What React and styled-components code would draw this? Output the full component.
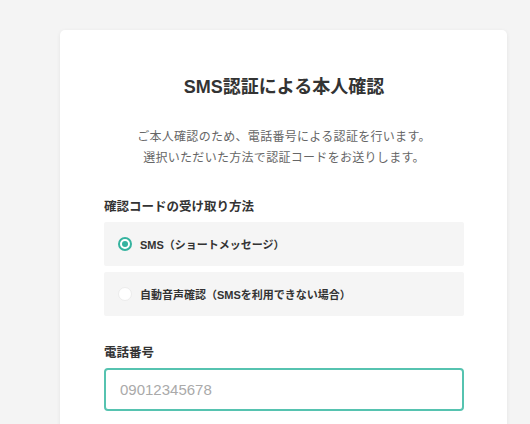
import React from 'react';
import styled, { createGlobalStyle } from 'styled-components';

const GlobalStyle = createGlobalStyle`
  html, body {
    margin: 0;
    padding: 0;
    background: #f4f4f4;
  }
  body {
    font-family: "Liberation Sans", "Noto Sans CJK JP", sans-serif;
    color: #333;
  }
`;

const Page = styled.div`
  padding: 30px 0 0 60px;
`;

const Card = styled.div`
  width: 447px;
  box-sizing: border-box;
  padding: 44px 43px 40px 44px;
  background: #fff;
  border-radius: 5px;
  box-shadow: 0 1px 4px rgba(0, 0, 0, 0.07);
`;

const Title = styled.h1`
  margin: 0;
  font-size: 18px;
  line-height: 26px;
  font-weight: 700;
  text-align: center;
  color: #333;
`;

const Lead = styled.p`
  margin: 27px 0 0;
  font-size: 12px;
  line-height: 21px;
  letter-spacing: 0.3px;
  text-align: center;
  color: #666;
`;

const Section = styled.div`
  margin-top: ${(p) => p.$top}px;
`;

const Label = styled.div`
  font-size: 12.5px;
  line-height: 18px;
  font-weight: 700;
  color: #333;
  margin-bottom: 6px;
`;

const Options = styled.div`
  display: flex;
  flex-direction: column;
  gap: 6.5px;
`;

const Option = styled.label`
  display: flex;
  align-items: center;
  gap: 8px;
  height: 43.5px;
  padding-left: 14px;
  background: #f5f5f5;
  border-radius: 2px;
  cursor: pointer;
`;

const Radio = styled.span`
  width: 14px;
  height: 14px;
  box-sizing: border-box;
  border-radius: 50%;
  background: #fff;
  border: ${(p) => (p.$checked ? '2px solid #35b39f' : '1px solid #ececec')};
  display: flex;
  align-items: center;
  justify-content: center;

  &::after {
    content: '';
    display: ${(p) => (p.$checked ? 'block' : 'none')};
    width: 6px;
    height: 6px;
    border-radius: 50%;
    background: #35b39f;
  }
`;

const OptionText = styled.span`
  font-size: 11px;
  font-weight: 700;
  color: #333;
`;

const Input = styled.input`
  display: block;
  width: 100%;
  height: 43px;
  box-sizing: border-box;
  padding: 0 14px;
  border: 2px solid #56c3b0;
  border-radius: 4px;
  font-family: "Liberation Sans", "Noto Sans CJK JP", sans-serif;
  font-size: 15px;
  color: #333;
  caret-color: #333;
  outline: none;

  &::placeholder {
    color: #aaa;
  }
`;

const methods = [
  { id: 'sms', label: 'SMS（ショートメッセージ）' },
  { id: 'voice', label: '自動音声確認（SMSを利用できない場合）' },
];

export default function App() {
  const [method, setMethod] = React.useState('sms');

  return (
    <>
      <GlobalStyle />
      <Page>
        <Card>
          <Title>SMS認証による本人確認</Title>
          <Lead>
            ご本人確認のため、電話番号による認証を行います。
            <br />
            選択いただいた方法で認証コードをお送りします。
          </Lead>

          <Section $top={29}>
            <Label>確認コードの受け取り方法</Label>
            <Options>
              {methods.map((m) => (
                <Option key={m.id} onClick={() => setMethod(m.id)}>
                  <Radio $checked={method === m.id} />
                  <OptionText>{m.label}</OptionText>
                </Option>
              ))}
            </Options>
          </Section>

          <Section $top={28}>
            <Label>電話番号</Label>
            <Input type="tel" placeholder="09012345678" autoFocus />
          </Section>
        </Card>
      </Page>
    </>
  );
}
